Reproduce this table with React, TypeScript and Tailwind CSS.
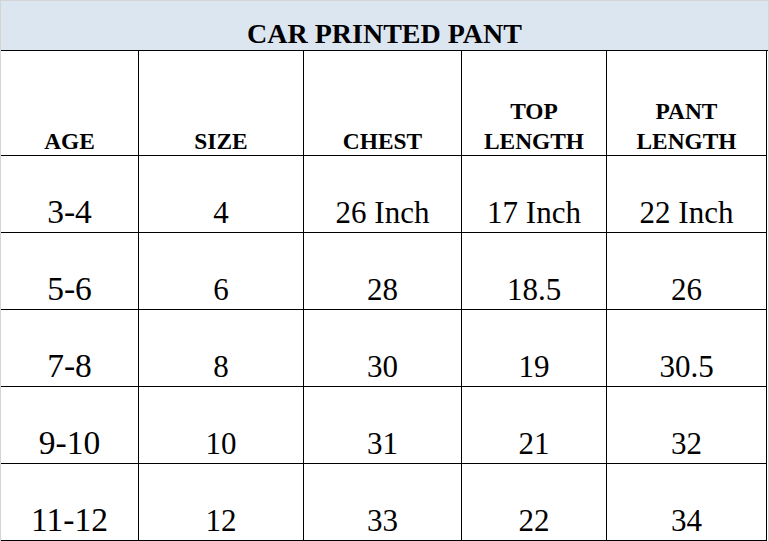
const headers: { label: string[]; }[] = [
  { label: ["AGE"] },
  { label: ["SIZE"] },
  { label: ["CHEST"] },
  { label: ["TOP", "LENGTH"] },
  { label: ["PANT", "LENGTH"] },
];

const rows: string[][] = [
  ["3-4", "4", "26 Inch", "17 Inch", "22 Inch"],
  ["5-6", "6", "28", "18.5", "26"],
  ["7-8", "8", "30", "19", "30.5"],
  ["9-10", "10", "31", "21", "32"],
  ["11-12", "12", "33", "22", "34"],
];

export default function App() {
  return (
    <div className="h-[541px] w-[769px] overflow-hidden border-t border-l border-r border-[#d4d4d4] bg-white font-['Liberation_Serif','Times_New_Roman',serif] text-black">
      {/* title */}
      <div className="flex h-[50px] items-end justify-center border-b border-black bg-[#dce6f1]">
        <span className="text-[28px] font-bold leading-[32px]">CAR PRINTED PANT</span>
      </div>

      <div className="grid grid-cols-[138px_165px_158px_145px_160px] grid-rows-[105px_repeat(5,77px)]">
        {headers.map((h, i) => (
          <div key={i} className="flex flex-col items-center justify-end border-r border-b border-black">
            <div className="mb-[-1px] text-center text-[23.4px] font-bold leading-[30px]">
              {h.label.map((l) => (
                <div key={l}>{l}</div>
              ))}
            </div>
          </div>
        ))}
        {rows.map((r, ri) =>
          r.map((c, ci) => (
            <div
              key={`${ri}-${ci}`}
              className="flex items-end justify-center border-r border-b border-black pb-1"
            >
              <span className={ci === 0 ? "text-[33.5px] leading-none" : "text-[31px] leading-none"}>{c}</span>
            </div>
          ))
        )}
      </div>
    </div>
  );
}
